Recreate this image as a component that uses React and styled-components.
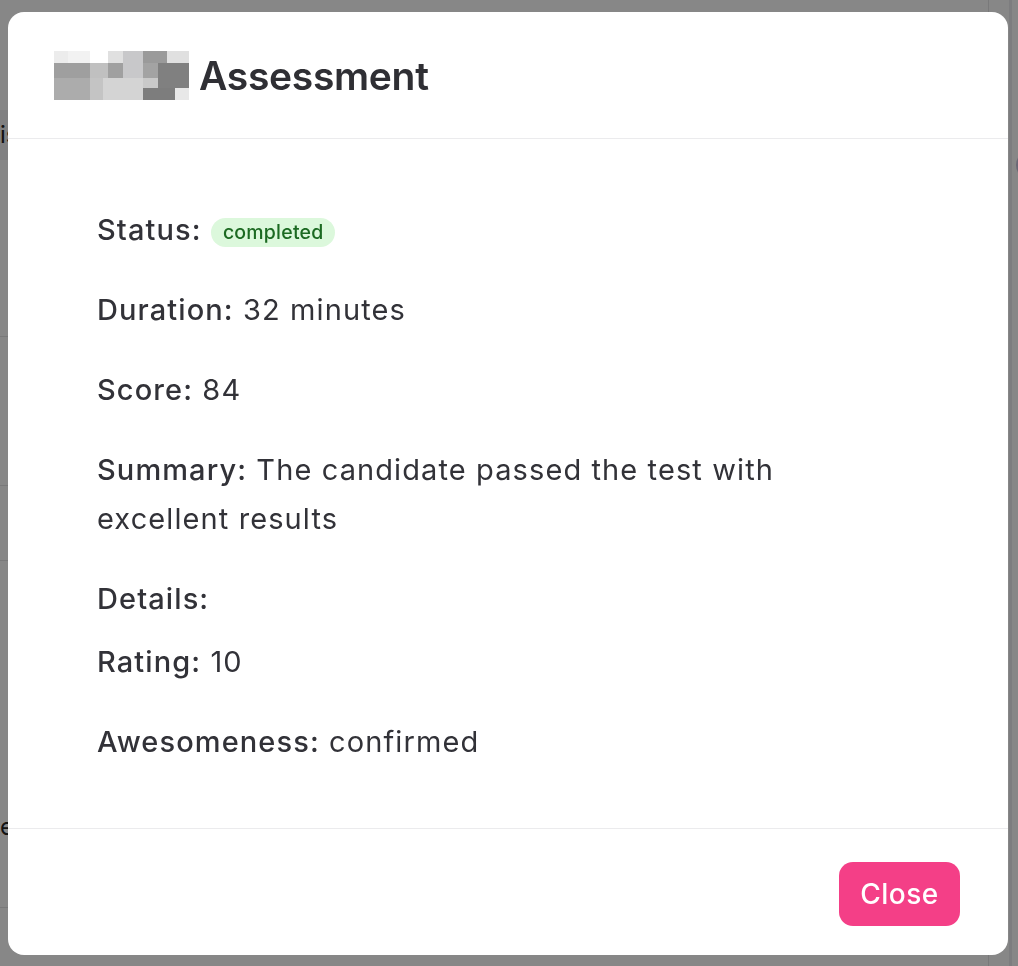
import React from "react";
import styled, { createGlobalStyle } from "styled-components";

const Global = createGlobalStyle`
  html, body { margin: 0; padding: 0; background: #ffffff; }
  body { font-family: Inter, "Noto Sans", "Liberation Sans", sans-serif; color: #323238; }
  * { box-sizing: border-box; }
`;

/* ---------- page behind the dialog ---------- */
const Page = styled.div`
  display: grid;
  grid-template-columns: 988px 21px 1fr;
  height: 966px;
  overflow: hidden;
`;
const TableCol = styled.div`
  display: flex;
  flex-direction: column;
`;
const Row = styled.div`
  height: ${(p) => p.$h}px;
  flex: none;
  display: flex;
  align-items: ${(p) => (p.$align === "end" ? "flex-end" : "center")};
  padding-bottom: ${(p) => p.$pb || 0}px;
  background: ${(p) => (p.$head ? "#f1f1f3" : "transparent")};
  border-bottom: 1px solid ${(p) => (p.$line ? "#e4e4e7" : "transparent")};
  font-size: 24px;
  color: #222;
`;
const MidCol = styled.div`
  border-left: 1px solid #e4e4e7;
`;
const SideCol = styled.div`
  border-left: 3px solid #ededf0;
  padding-top: 150px;
  padding-left: 4px;
`;
const Dot = styled.div`
  width: 30px;
  height: 30px;
  border-radius: 50%;
  background: #c9c2dc;
`;

/* ---------- dialog ---------- */
const Overlay = styled.div`
  position: fixed;
  inset: 0;
  background: rgba(0, 0, 0, 0.47);
  display: flex;
  align-items: flex-start;
  padding: 12px 0 0 8px;
`;
const Dialog = styled.div`
  width: 1000px;
  height: 943px;
  background: #ffffff;
  border-radius: 16px;
  display: flex;
  flex-direction: column;
  overflow: hidden;
`;
const Header = styled.header`
  height: 127px;
  flex: none;
  display: flex;
  align-items: center;
  gap: 10px;
  padding: 0 46px;
  border-bottom: 1px solid #ebebed;
`;
const Title = styled.h2`
  margin: 0;
  font-size: 39px;
  font-weight: 600;
  letter-spacing: -0.3px;
  color: #2f2f34;
`;
const Body = styled.div`
  flex: 1;
  padding: 66px 0 0 89px;
`;
const Content = styled.div`
  max-width: 730px;
`;
const Field = styled.p`
  margin: 0 0 ${(p) => (p.$tight ? 14 : 31)}px;
  font-size: 29px;
  line-height: 49px;
  letter-spacing: 1.1px;
  color: #323238;
`;
const Label = styled.span`
  font-weight: 500;
`;
const Badge = styled.span`
  display: inline-block;
  vertical-align: 1px;
  padding: 0 12px;
  height: 29px;
  line-height: 29px;
  border-radius: 15px;
  background: #dcf8dc;
  color: #1c6a22;
  font-size: 19.5px;
  font-weight: 500;
  letter-spacing: 0.2px;
`;
const Footer = styled.footer`
  height: 127px;
  flex: none;
  display: flex;
  align-items: center;
  justify-content: flex-end;
  padding: 4px 48px 0;
  border-top: 1px solid #ebebed;
`;
const CloseButton = styled.button`
  width: 121px;
  height: 64px;
  border: none;
  border-radius: 14px;
  background: #f43f87;
  color: #ffffff;
  font-family: inherit;
  font-size: 28px;
  font-weight: 500;
  letter-spacing: 0.5px;
  cursor: pointer;
`;

/* pixelated (redacted) avatar drawing */
const mosaic = [
  [0, 0, 14, 12, "#ececec"], [14, 0, 22, 12, "#f2f2f2"], [36, 0, 18, 12, "#ffffff"],
  [54, 0, 15, 12, "#e0e0e0"], [69, 0, 20, 12, "#c8c8ca"], [89, 0, 24, 12, "#9a9a9a"],
  [113, 0, 22, 12, "#e0e0e0"],
  [0, 12, 36, 15, "#9f9f9f"], [36, 12, 18, 15, "#c0c0c0"], [54, 12, 15, 15, "#a0a0a0"],
  [69, 12, 20, 15, "#c8c8ca"], [89, 12, 15, 15, "#a3a3a3"], [104, 12, 31, 15, "#808080"],
  [0, 27, 36, 10, "#acacac"], [36, 27, 13, 10, "#c4c4c4"], [49, 27, 40, 10, "#d4d4d4"],
  [89, 27, 15, 10, "#c9c9c9"], [104, 27, 31, 10, "#808080"],
  [0, 37, 36, 12, "#acacac"], [36, 37, 13, 12, "#c4c4c4"], [49, 37, 40, 12, "#d4d4d4"],
  [89, 37, 32, 12, "#7d7d7d"], [121, 37, 14, 12, "#e8e8e8"],
];

const Mosaic = () => (
  <svg width="135" height="49" viewBox="0 0 135 49" aria-hidden="true" shapeRendering="crispEdges">
    {mosaic.map(([x, y, w, h, f], i) => (
      <rect key={i} x={x} y={y} width={w} height={h} fill={f} />
    ))}
  </svg>
);

export default function App() {
  return (
    <>
      <Global />
      <Page>
        <TableCol>
          <Row $h={110} />
          <Row $h={50} $head>is</Row>
          <Row $h={177} $line />
          <Row $h={149} $line />
          <Row $h={75} $line />
          <Row $h={347} $line $align="end" $pb={66}>e:</Row>
          <Row $h={58} />
        </TableCol>
        <MidCol />
        <SideCol>
          <Dot />
        </SideCol>
      </Page>
      <Overlay>
        <Dialog role="dialog" aria-modal="true">
          <Header>
            <Mosaic />
            <Title>Assessment</Title>
          </Header>
          <Body>
            <Content>
              <Field>
                <Label>Status:</Label> <Badge>completed</Badge>
              </Field>
              <Field>
                <Label>Duration:</Label> 32 minutes
              </Field>
              <Field>
                <Label>Score:</Label> 84
              </Field>
              <Field>
                <Label>Summary:</Label> The candidate passed the test with excellent results
              </Field>
              <Field $tight>
                <Label>Details:</Label>
              </Field>
              <Field>
                <Label>Rating:</Label> 10
              </Field>
              <Field>
                <Label>Awesomeness:</Label> confirmed
              </Field>
            </Content>
          </Body>
          <Footer>
            <CloseButton>Close</CloseButton>
          </Footer>
        </Dialog>
      </Overlay>
    </>
  );
}
